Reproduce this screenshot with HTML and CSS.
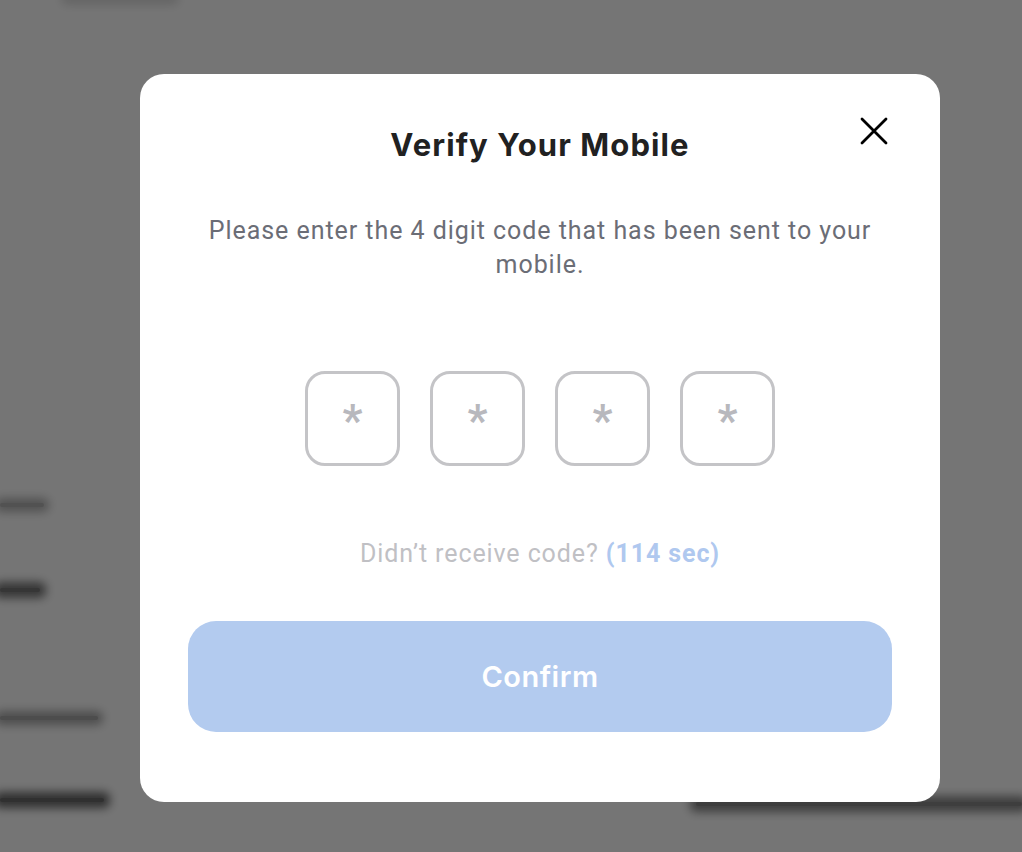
FILE: index.html
```html
<!DOCTYPE html>
<html lang="en">
<head>
    <meta charset="UTF-8">
    <meta name="viewport" content="width=device-width, initial-scale=1.0">
    <title>Verify Your Mobile</title>
    <link rel="stylesheet" href="styles.css">
</head>
<body>

    <!-- blurred page behind the dialog -->
    <div class="page">
        <div class="bar bar-top"></div>
        <div class="fields">
            <div class="col">
                <div class="bar bar-label"></div>
                <div class="bar bar-value"></div>
                <div class="bar bar-label2"></div>
                <div class="bar bar-value2"></div>
            </div>
            <div class="col">
                <div class="bar bar-right"></div>
            </div>
        </div>
    </div>

    <div class="overlay">
        <div class="modal">
            <button class="close" aria-label="Close">
                <svg width="28" height="28" viewBox="0 0 28 28">
                    <path d="M2 2 L26 26 M26 2 L2 26" stroke="#000" stroke-width="2.8" stroke-linecap="round"/>
                </svg>
            </button>

            <h2 class="title">Verify Your Mobile</h2>
            <p class="desc">Please enter the 4 digit code that has been sent to your mobile.</p>

            <div class="otp">
                <input class="digit" type="text" maxlength="1" placeholder="*">
                <input class="digit" type="text" maxlength="1" placeholder="*">
                <input class="digit" type="text" maxlength="1" placeholder="*">
                <input class="digit" type="text" maxlength="1" placeholder="*">
            </div>

            <p class="resend">Didn’t receive code? <span class="timer">(114 sec)</span></p>

            <button class="confirm" disabled>Confirm</button>
        </div>
    </div>

</body>
</html>
```

FILE: styles.css
```css
body {
    margin: 0;
    font-family: Roboto, "Liberation Sans", sans-serif;
    background-color: #fff;
    overflow: hidden;
    height: 852px;
}

/* page behind the dialog, soft smudges of text */
.bar {
    height: 4px;
    border-radius: 2px;
}
.bar-top {
    margin: -4px 0 0 66px;
    width: 108px;
    background-color: #ddd;
    box-shadow: 0 0 10px 5px #ddd;
}
.fields {
    display: grid;
    grid-template-columns: 696px 1fr;
}
.bar-label {
    margin-top: 503px;
    width: 44px;
    background-color: #b4b4b4;
    box-shadow: 0 0 10px 5px #b4b4b4;
}
.bar-value {
    margin-top: 81px;
    width: 40px;
    background-color: #777;
    box-shadow: 0 0 10px 6px #777;
}
.bar-label2 {
    margin-top: 124px;
    width: 98px;
    background-color: #a8a8a8;
    box-shadow: 0 0 10px 5px #a8a8a8;
}
.bar-value2 {
    margin-top: 78px;
    width: 104px;
    background-color: #6a6a6a;
    box-shadow: 0 0 10px 6px #6a6a6a;
}
.bar-right {
    margin-top: 802px;
    background-color: #888;
    box-shadow: 0 0 10px 6px #888;
}

.overlay {
    position: fixed;
    inset: 0;
    background-color: rgba(0,0,0,0.54);
    display: flex;
    align-items: flex-start;
    padding: 74px 0 0 140px;
}

.modal {
    position: relative;
    width: 800px;
    box-sizing: border-box;
    background-color: #fff;
    border-radius: 24px;
    padding: 53px 48px 70px;
    text-align: center;
}

.close {
    position: absolute;
    top: 43px;
    right: 52px;
    background: none;
    border: none;
    padding: 0;
    width: 28px;
    height: 28px;
    cursor: pointer;
}
.close svg {
    display: block;
}

.title {
    margin: 0;
    font-family: Inter, sans-serif;
    font-size: 31px;
    line-height: 36px;
    font-weight: 700;
    letter-spacing: 1.1px;
    color: #212121;
}

.desc {
    margin: 51px auto 0;
    max-width: 690px;
    font-size: 25px;
    line-height: 34px;
    letter-spacing: 0.95px;
    color: #6b6d76;
}

.otp {
    display: flex;
    justify-content: center;
    gap: 30px;
    margin-top: 89px;
}
.digit {
    width: 95px;
    height: 95px;
    box-sizing: border-box;
    border: 3px solid #c4c4c7;
    border-radius: 20px;
    text-align: center;
    font-family: Roboto, sans-serif;
    font-size: 44px;
    font-weight: 700;
    padding: 4px 0 0;
    color: #333;
    outline: none;
}
.digit::placeholder {
    color: #b8b8bd;
}

.resend {
    margin: 71px 0 0;
    font-size: 25px;
    line-height: 34px;
    letter-spacing: 0.9px;
    color: #c0c0c4;
}
.timer {
    font-weight: 700;
    color: #afc8ef;
}

.confirm {
    display: block;
    width: 100%;
    height: 111px;
    margin-top: 50px;
    border: none;
    border-radius: 28px;
    background-color: #b3cbef;
    color: #fff;
    font-family: Inter, sans-serif;
    font-size: 29px;
    font-weight: 600;
    letter-spacing: 0.5px;
    cursor: pointer;
}
.confirm:disabled {
    cursor: not-allowed;
}
```
